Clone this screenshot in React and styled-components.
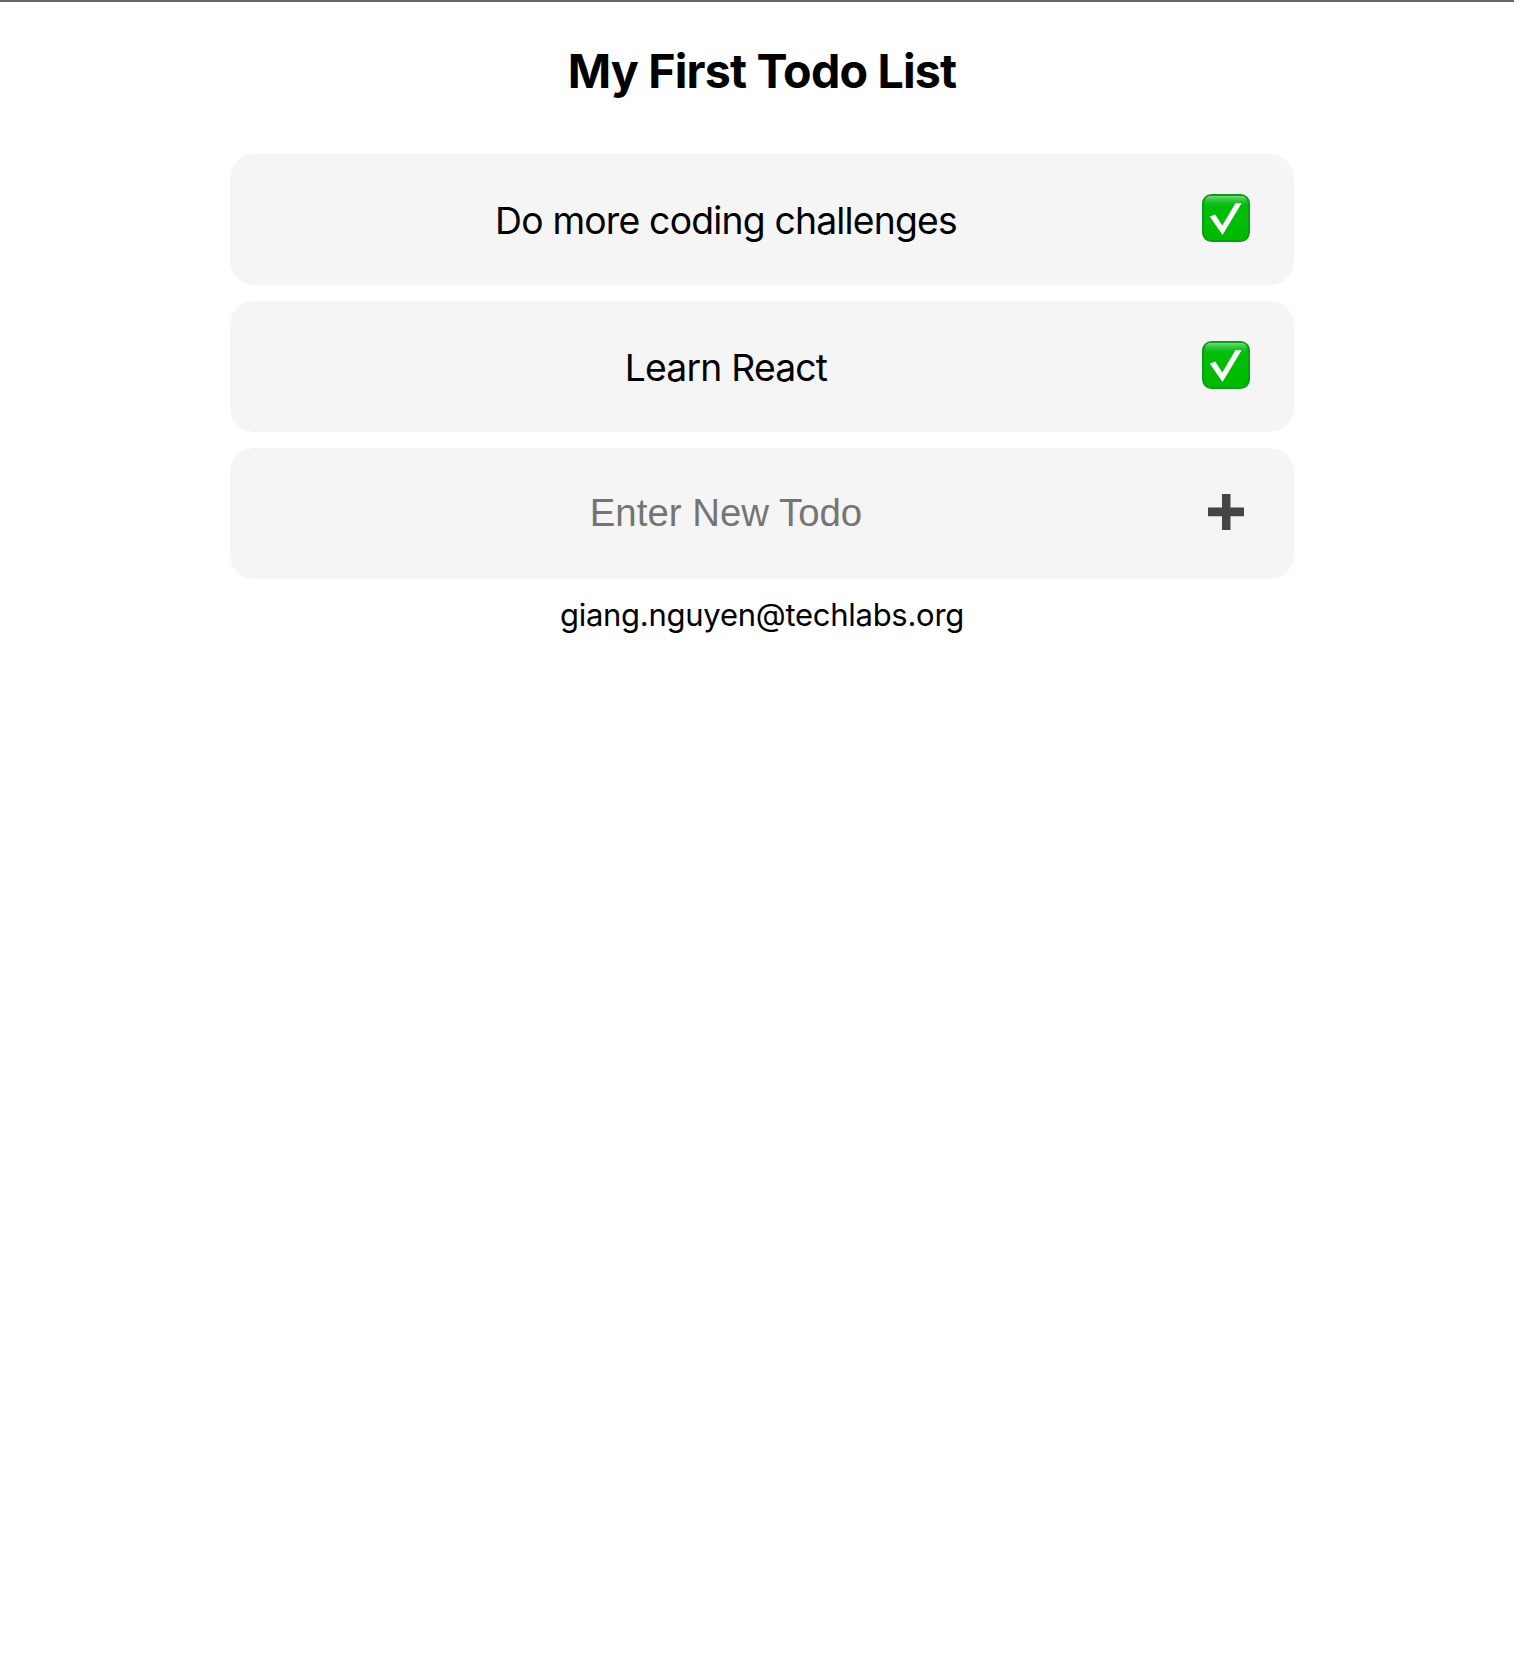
import React, { useState } from "react";
import styled, { createGlobalStyle } from "styled-components";

const GlobalStyle = createGlobalStyle`
  * { box-sizing: border-box; }
  body {
    margin: 0;
    background: #fff;
    color: #000;
    font-family: Inter, "Liberation Sans", sans-serif;
  }
`;

const Page = styled.main`
  display: flex;
  flex-direction: column;
  align-items: center;
  min-height: 1656px;
  padding-left: 10px;
  border-top: 2px solid #696667;
`;

const Title = styled.h1`
  margin: 0;
  padding-top: 40px;
  height: 152px;
  font-size: 46.6px;
  font-weight: 700;
  line-height: 58px;
  letter-spacing: -0.82px;
`;

const List = styled.ul`
  display: flex;
  flex-direction: column;
  gap: 16px;
  width: 1064px;
  margin: 0;
  padding: 0;
  list-style: none;
`;

const Row = styled.li`
  display: flex;
  align-items: center;
  height: 131px;
  padding: 0 32px;
  border-radius: 24px;
  background: #f5f5f5;
`;

const Label = styled.span`
  flex: 1;
  padding-top: 2px;
  text-align: center;
  font-size: 37.3px;
  line-height: 46px;
  letter-spacing: -0.8px;
`;

const Input = styled.input`
  flex: 1;
  min-width: 0;
  padding: 0 0 2px;
  border: 0;
  outline: 0;
  background: transparent;
  text-align: center;
  font-family: "Liberation Sans", Arial, sans-serif;
  font-size: 38.4px;
  line-height: 46px;
  &::placeholder { color: #757575; opacity: 1; }
`;

const IconButton = styled.button`
  display: flex;
  justify-content: center;
  width: 72px;
  padding: 0 0 4px;
  border: 0;
  background: transparent;
`;

const Email = styled.footer`
  padding-top: 16px;
  font-size: 31px;
  line-height: 40px;
  letter-spacing: -0.27px;
`;

function CheckIcon() {
  return (
    <svg width="48" height="48" viewBox="0 0 48 48">
      <defs>
        <linearGradient id="face" x1="0" y1="0" x2="0" y2="1">
          <stop offset="0" stopColor="#12b51c" />
          <stop offset="0.3" stopColor="#00bf08" />
          <stop offset="1" stopColor="#00b900" />
        </linearGradient>
        <linearGradient id="gloss" x1="0" y1="0" x2="0" y2="1">
          <stop offset="0" stopColor="#7fdc84" stopOpacity="0.9" />
          <stop offset="1" stopColor="#20c828" stopOpacity="0" />
        </linearGradient>
      </defs>
      <rect x="0.9" y="0.9" width="46.2" height="46.2" rx="8.5" fill="url(#face)" stroke="#0a9a1a" strokeWidth="1.8" />
      <rect x="3" y="2" width="42" height="10" rx="5" fill="url(#gloss)" />
      <path d="M7.8 22.4 L13.2 20.6 L20.3 31.5 L33.4 9.3 L39.6 9.3 L20.5 41 Z" fill="#fff" />
    </svg>
  );
}

function PlusIcon() {
  return (
    <svg width="36" height="36" viewBox="0 0 36 36">
      <path d="M14 0h8.5v13.6H36v8.6H22.5V36H14V22.2H0v-8.6h14Z" fill="#454545" />
    </svg>
  );
}

const todos = [
  { text: "Do more coding challenges" },
  { text: "Learn React" },
];

export default function App() {
  const [draft, setDraft] = useState("");
  return (
    <Page>
      <GlobalStyle />
      <Title>My First Todo List</Title>
      <List>
        {todos.map((todo) => (
          <Row key={todo.text}>
            <Label>{todo.text}</Label>
            <IconButton aria-label="Done"><CheckIcon /></IconButton>
          </Row>
        ))}
        <Row>
          <Input
            value={draft}
            placeholder="Enter New Todo"
            onChange={(e) => setDraft(e.target.value)}
          />
          <IconButton aria-label="Add"><PlusIcon /></IconButton>
        </Row>
      </List>
      <Email>giang.nguyen@techlabs.org</Email>
    </Page>
  );
}
